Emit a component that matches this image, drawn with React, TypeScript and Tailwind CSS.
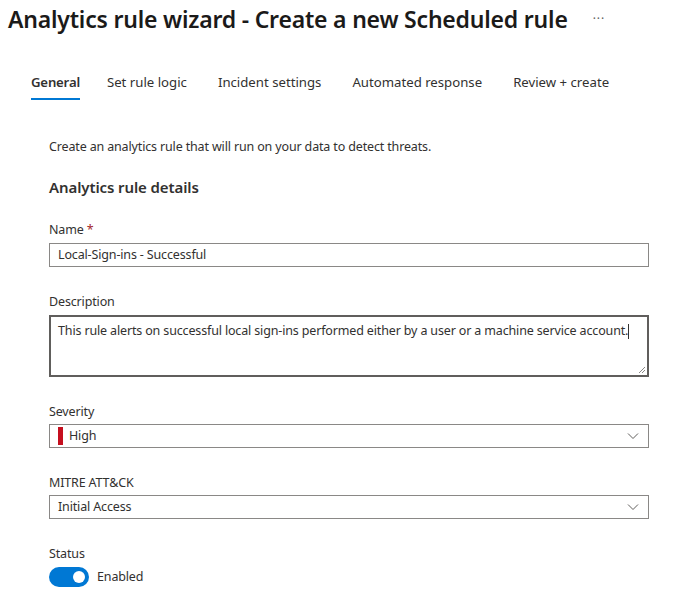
import React from 'react';

const font = { fontFamily: '"Noto Sans", "Open Sans", sans-serif' };

const Chevron: React.FC = () => (
  <svg width="12" height="12" viewBox="0 0 12 12" fill="none" className="text-[#605e5c]">
    <path d="M1 3.5l5 5 5-5" stroke="currentColor" strokeWidth="1" />
  </svg>
);

export default function App() {
  const tabs = [
    { label: 'General', cls: 'ml-[31px]' },
    { label: 'Set rule logic', cls: 'ml-[27px]' },
    { label: 'Incident settings', cls: 'ml-[31px]' },
    { label: 'Automated response', cls: 'ml-[31px]' },
    { label: 'Review + create', cls: 'ml-[31px]' },
  ];
  return (
    <div className="w-[677px] h-[606px] bg-white text-[#323130] overflow-hidden" style={font}>
      <div className="flex items-center pl-2 pt-[2px] h-[36px]">
        <h1 className="text-[23px] leading-[32px] font-semibold tracking-[-0.2px] text-[#1b1a19]">
          Analytics rule wizard - Create a new Scheduled rule
        </h1>
        <span className="ml-[25px] text-[12px] text-[#605e5c] tracking-[1px]">···</span>
      </div>

      {/* Tabs */}
      <div className="flex mt-[36px] text-[13.2px]">
        {tabs.map((t, i) => (
          <div key={t.label} className={`flex flex-col items-center ${t.cls}`}>
            <span className={i === 0 ? 'font-semibold leading-[20px] tracking-[-0.2px]' : 'leading-[20px]'}>{t.label}</span>
            <div className={i === 0 ? 'mt-[6px] h-[2px] w-full bg-[#0078d4]' : 'mt-[6px] h-[2px] w-full'} />
          </div>
        ))}
      </div>

      <div className="pl-[49px] pr-[28px] text-[12.5px] tracking-[-0.15px]">
        <p className="mt-[38px] leading-[18px]">Create an analytics rule that will run on your data to detect threats.</p>
        <h2 className="mt-[20px] text-[15px] font-semibold leading-[22px] tracking-[-0.1px]">Analytics rule details</h2>

        <label className="block mt-[23px] leading-[18px]">
          Name <span className="text-[#a4262c]">*</span>
        </label>
        <div className="mt-[4px] h-[24px] border border-[#8a8886] flex items-center px-[8px]">
          Local-Sign-ins - Successful
        </div>

        <label className="block mt-[26px] leading-[18px]">Description</label>
        <div className="mt-[4px] h-[62px] border-2 border-[#605e5c] px-[7px] pt-[5px] relative leading-[18px]">
          This rule alerts on successful local sign-ins performed either by a user or a machine service account.
          <span className="inline-block w-px h-[15px] bg-[#323130] align-middle" />
          <svg width="8" height="8" viewBox="0 0 8 8" className="absolute right-[1px] bottom-[1px]">
            <path d="M7 1L1 7M7 4L4 7" stroke="#8a8886" strokeWidth="1" />
          </svg>
        </div>

        <label className="block mt-[26px] leading-[18px]">Severity</label>
        <div className="mt-[3px] h-[24px] border border-[#8a8886] flex items-center pl-[8px] pr-[9px]">
          <span className="w-[5px] h-[18px] bg-[#c50f1f] mr-[6px]" />
          <span className="flex-1">High</span>
          <Chevron />
        </div>

        <label className="block mt-[26px] leading-[18px]">MITRE ATT&amp;CK</label>
        <div className="mt-[3px] h-[24px] border border-[#8a8886] flex items-center pl-[8px] pr-[9px]">
          <span className="flex-1">Initial Access</span>
          <Chevron />
        </div>

        <label className="block mt-[26px] leading-[18px]">Status</label>
        <div className="mt-[4px] flex items-center gap-[8px]">
          <div className="w-[40px] h-[20px] rounded-full bg-[#0078d4] flex items-center justify-end pr-[4px]">
            <div className="w-[12px] h-[12px] rounded-full bg-white" />
          </div>
          <span>Enabled</span>
        </div>
      </div>
    </div>
  );
}
